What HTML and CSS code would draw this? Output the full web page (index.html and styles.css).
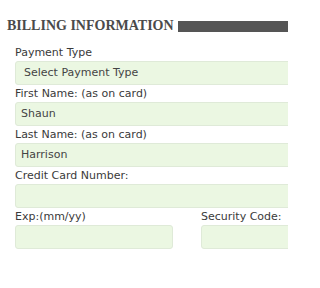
FILE: index.html
```html
<!DOCTYPE html>
<html>
<head>
<meta charset="utf-8">
<link rel="stylesheet" href="styles.css">
</head>
<body>
<div class="page">
  <h2 class="heading"><span class="heading-text">BILLING INFORMATION</span><span class="heading-bar"></span></h2>
  <div class="form">
    <div class="field">
      <label class="label">Payment Type</label>
      <div class="input select">Select Payment Type</div>
    </div>
    <div class="field">
      <label class="label">First Name: (as on card)</label>
      <div class="input">Shaun</div>
    </div>
    <div class="field">
      <label class="label">Last Name: (as on card)</label>
      <div class="input">Harrison</div>
    </div>
    <div class="field">
      <label class="label">Credit Card Number:</label>
      <div class="input"></div>
    </div>
    <div class="row">
      <div class="field">
        <label class="label">Exp:(mm/yy)</label>
        <div class="input short"></div>
      </div>
      <div class="field">
        <label class="label">Security Code:</label>
        <div class="input short"></div>
      </div>
    </div>
  </div>
</div>
</body>
</html>
```
FILE: styles.css
```css
html, body {
  margin: 0;
  padding: 0;
  background: #ffffff;
  overflow: hidden;
}
.page {
  box-sizing: border-box;
  width: 288px;
  height: 288px;
  overflow: hidden;
  padding: 16px 0 0 7px;
}
.heading {
  margin: 0;
  width: 300px;
  display: flex;
  align-items: center;
  height: 20px;
  font-family: "Liberation Serif", serif;
  font-weight: bold;
  font-size: 14px;
  color: #4a4a4a;
}
.heading-text {
  white-space: nowrap;
}
.heading-bar {
  flex: 1;
  height: 11px;
  margin-left: 4px;
  margin-top: 1px;
  background: #555555;
}
.form {
  width: 300px;
  padding: 8px 0 0 8px;
  font-family: "DejaVu Sans", sans-serif;
  font-size: 11px;
  color: #3a3a3a;
}
.field {
  display: flex;
  flex-direction: column;
}
.label {
  height: 17px;
  line-height: 17px;
}
.input {
  box-sizing: border-box;
  height: 24px;
  line-height: 22px;
  background: #ebf7e2;
  border: 1px solid #dfead8;
  border-radius: 3px;
  padding: 0 5px;
  color: #444444;
}
.select {
  padding-left: 8px;
}
.row {
  display: grid;
  grid-template-columns: 158px 158px;
  column-gap: 28px;
}
```
